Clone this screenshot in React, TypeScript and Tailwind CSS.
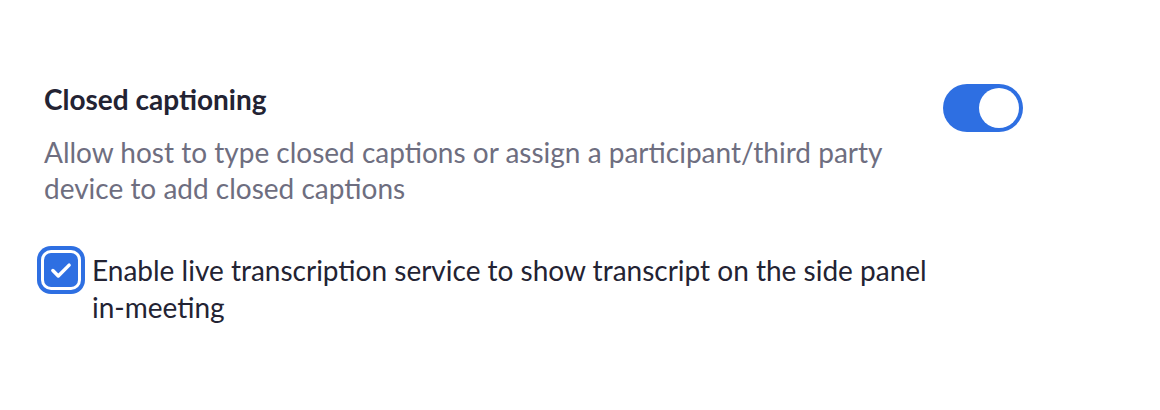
import React, { useState } from 'react';

const Toggle = ({ on, onChange }: { on: boolean; onChange: (v: boolean) => void }) => {
  return (
    <button
      type="button"
      onClick={() => onChange(!on)}
      className={`relative w-[80px] h-[48px] rounded-full shrink-0 p-[4px] flex items-center ${
        on ? 'bg-[#2e6fe2] justify-end' : 'bg-[#c4c6ce] justify-start'
      }`}
    >
      <span className="block w-[40px] h-[40px] rounded-full bg-white" />
    </button>
  );
};

const Checkbox = ({ checked, onChange }: { checked: boolean; onChange: (v: boolean) => void }) => {
  return (
    <button
      type="button"
      onClick={() => onChange(!checked)}
      className={`w-[34px] h-[34px] rounded-[7px] shrink-0 flex items-center justify-center shadow-[0_0_0_3px_#ffffff,0_0_0_7px_#2e6fe2] ${
        checked ? 'bg-[#2e6fe2]' : 'bg-white border-2 border-[#babacc]'
      }`}
    >
      {checked && (
        <svg width="26" height="26" viewBox="0 0 24 24" fill="none" className="shrink-0">
          <polyline
            points="4.5,12.5 9.5,17.5 19.5,7.5"
            stroke="#ffffff"
            strokeWidth="3.2"
            strokeLinecap="round"
            strokeLinejoin="round"
          />
        </svg>
      )}
    </button>
  );
};

export default function App() {
  const [captions, setCaptions] = useState(true);
  const [live, setLive] = useState(true);

  return (
    <div className="w-[1160px] h-[410px] bg-white" style={{ fontFamily: 'Lato, "Open Sans", sans-serif' }}>
      <div className="flex items-start pt-[81px] pl-[44px] pr-[137px]">
        <div className="w-[900px]">
          <h3 className="text-[28px] leading-[36px] font-bold text-[#232333]">Closed captioning</h3>
          <p className="mt-[17px] text-[28px] leading-[36px] text-[#6e6e80]">
            Allow host to type closed captions or assign a participant/third party device to add closed captions
          </p>
          <label className="mt-[46px] flex items-start gap-[14px]">
            <span className="mt-[1px]">
              <Checkbox checked={live} onChange={setLive} />
            </span>
            <span className="text-[28px] leading-[37px] text-[#232333]">
              Enable live transcription service to show transcript on the side panel in-meeting
            </span>
          </label>
        </div>
        <div className="ml-auto mt-[3px]">
          <Toggle on={captions} onChange={setCaptions} />
        </div>
      </div>
    </div>
  );
}
